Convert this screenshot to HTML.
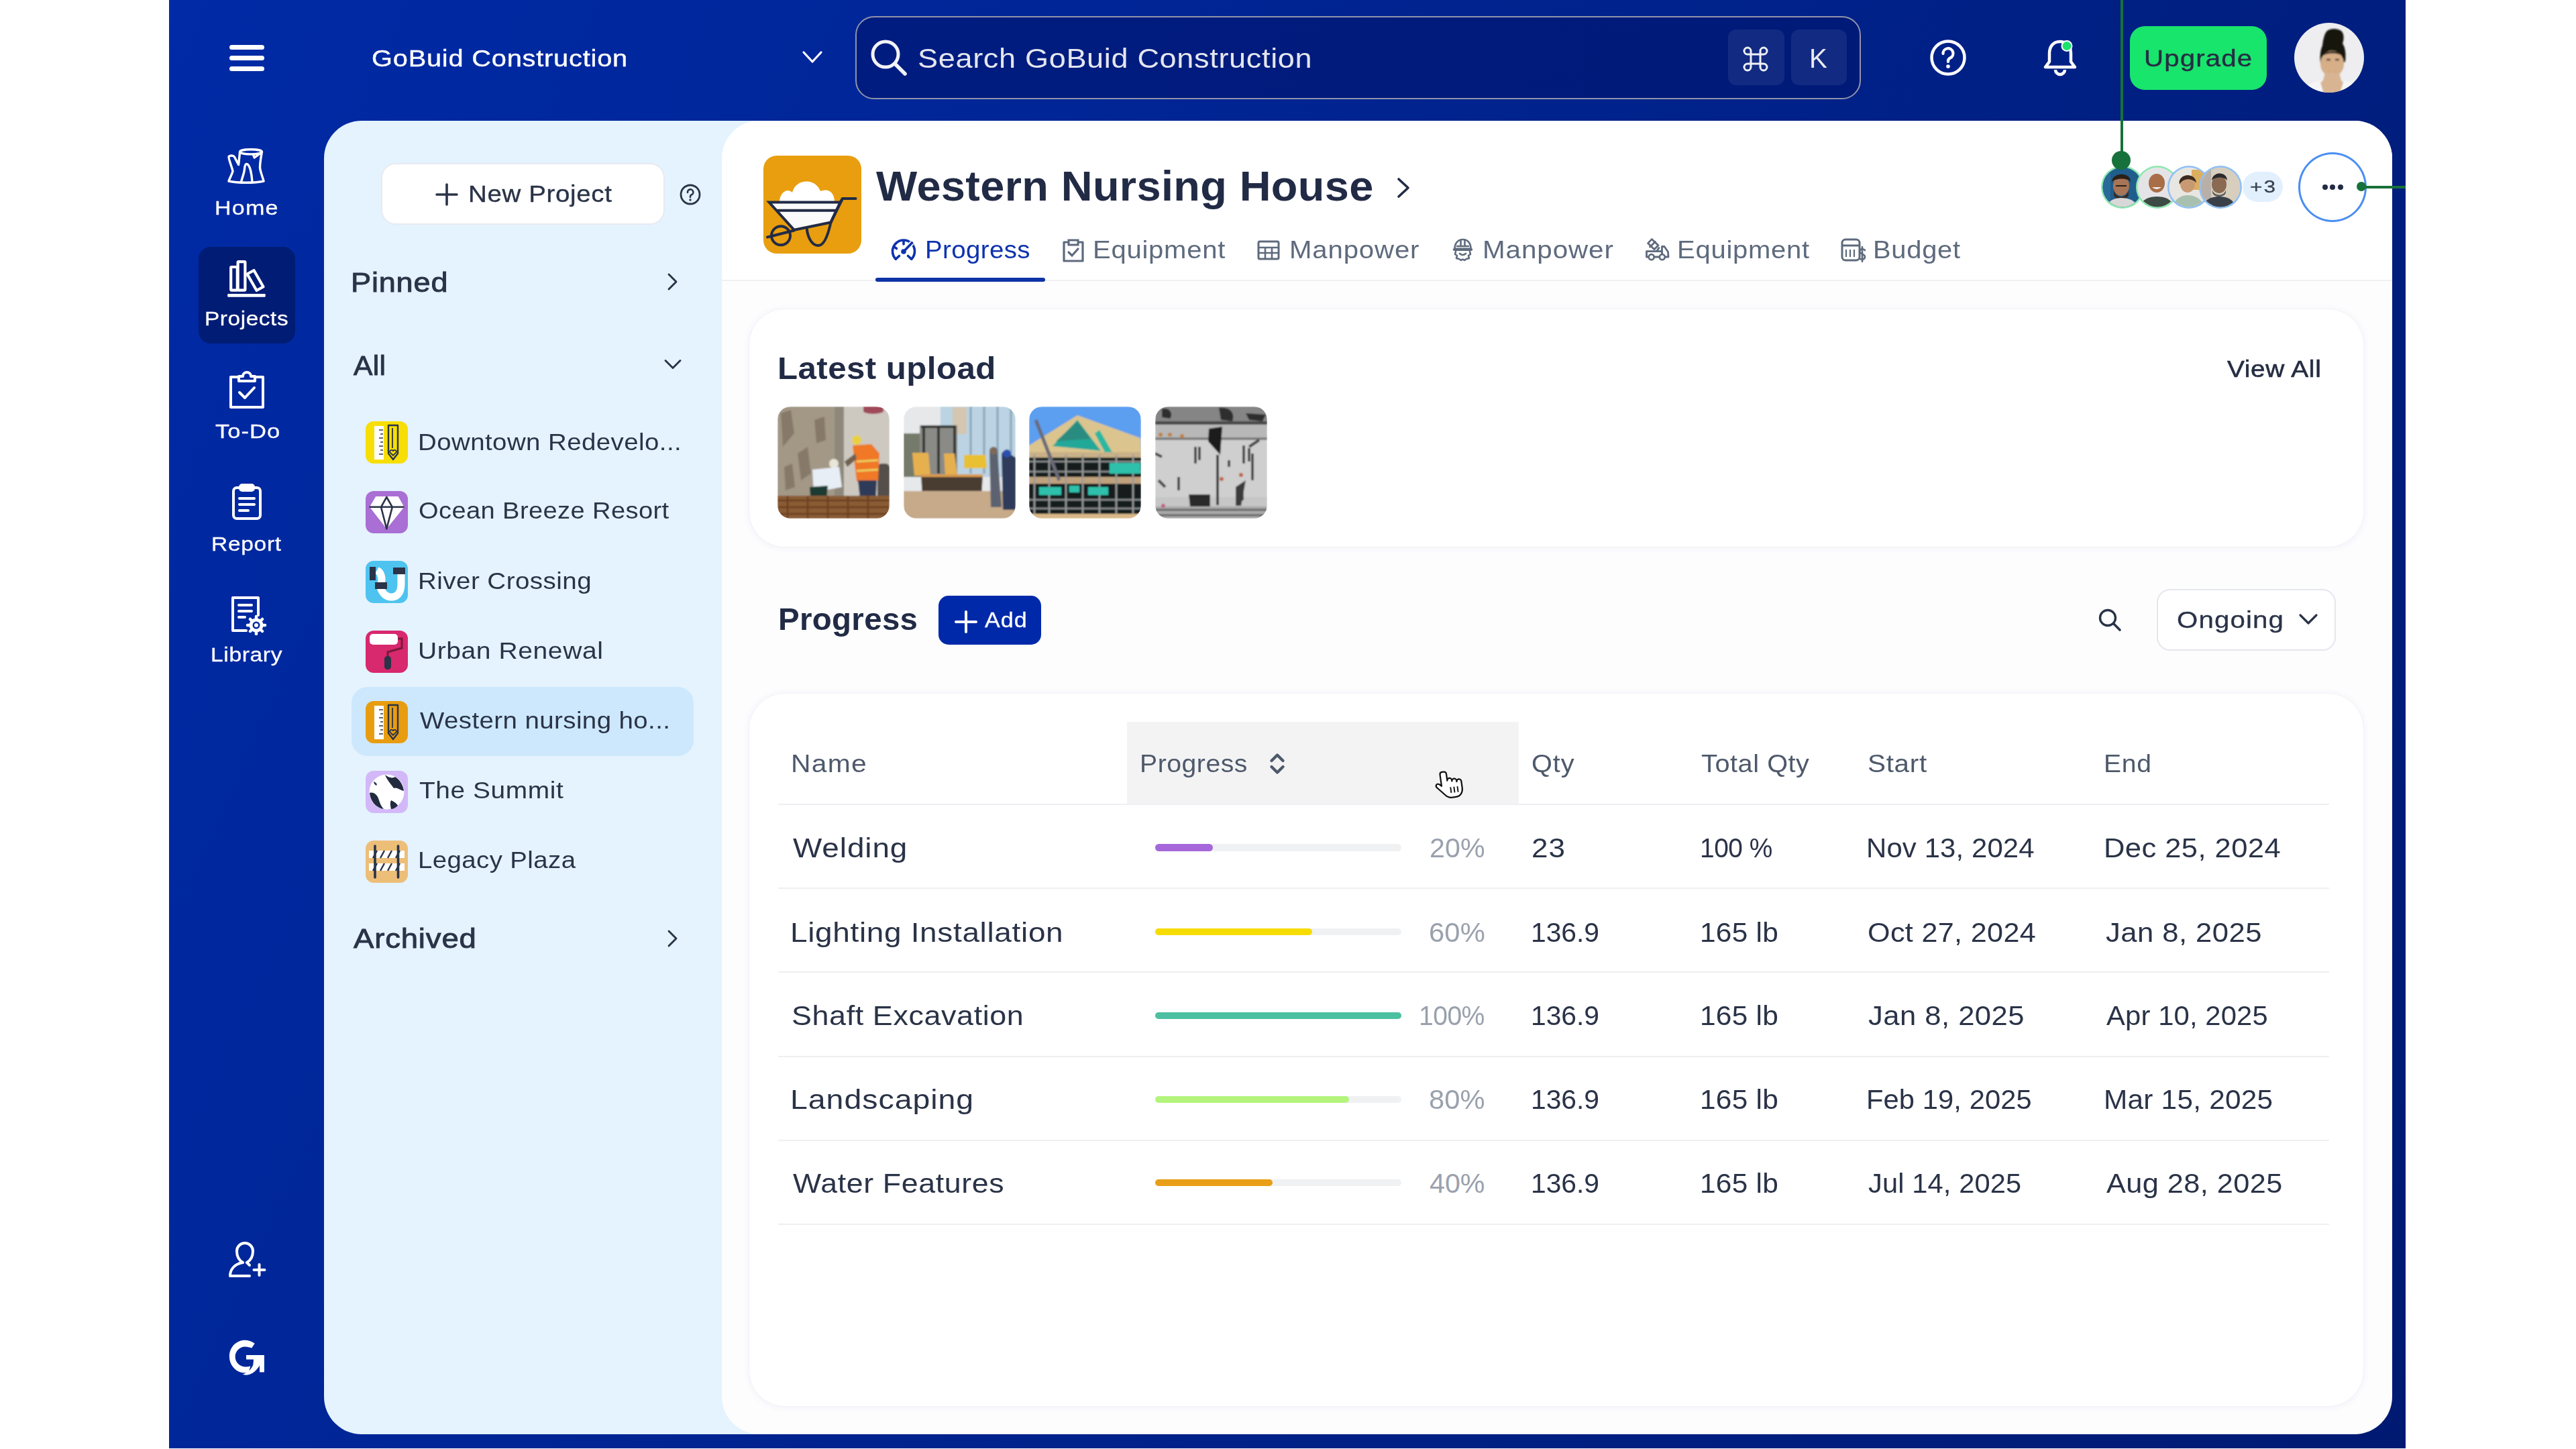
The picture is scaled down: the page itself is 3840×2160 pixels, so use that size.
<!DOCTYPE html><html><head><meta charset="utf-8"><style>
html,body{margin:0;padding:0;width:3840px;height:2160px;overflow:hidden;background:#fff;}
body{position:relative;font-family:"Liberation Sans",sans-serif;}
.a{position:absolute;display:block;}
.t{position:absolute;line-height:1;white-space:nowrap;}
</style></head><body>
<div class="a" style="left:252px;top:0px;width:3334px;height:2159px;background:linear-gradient(115deg,#002AA6 0%,#001C78 90%,#001A72 100%);"></div>
<div class="a" style="left:342px;top:66.5px;width:52px;height:7.0px;background:#fff;border-radius:4px;"></div>
<div class="a" style="left:342px;top:82.6px;width:52px;height:7.0px;background:#fff;border-radius:4px;"></div>
<div class="a" style="left:342px;top:98.8px;width:52px;height:7.0px;background:#fff;border-radius:4px;"></div>
<div class="t" style="left:554.2px;top:69.0px;font-size:35.18px;color:#fff;-webkit-text-stroke:0.4px #fff;letter-spacing:0.69px;transform:scaleX(1.1313);transform-origin:0 0;">GoBuid Construction</div>
<svg class="a" style="left:1194px;top:72px;" width="34" height="28" viewBox="0 0 34 28"><path d="M4 6 L17 20 L30 6" fill="none" stroke="#fff" stroke-width="3.2" stroke-linecap="round" stroke-linejoin="round"/></svg>
<div class="a" style="left:1274.5px;top:24px;width:1499.1px;height:124px;box-sizing:border-box;border:2.5px solid #8F93AA;border-radius:28px;background:linear-gradient(100deg,#001C80,#001A78);"></div>
<svg class="a" style="left:1295px;top:56px;" width="60" height="60" viewBox="0 0 60 60"><circle cx="25" cy="25" r="19" fill="none" stroke="#F2F3F7" stroke-width="5"/><path d="M39 39 L54 54" stroke="#F2F3F7" stroke-width="5.5" stroke-linecap="round"/></svg>
<div class="t" style="left:1367.6px;top:66.7px;font-size:41.13px;color:#E4E6EE;letter-spacing:0.60px;transform:scaleX(1.0960);transform-origin:0 0;">Search GoBuid Construction</div>
<div class="a" style="left:2576px;top:44px;width:83.5px;height:83px;background:rgba(255,255,255,0.07);border-radius:12px;"></div>
<div class="a" style="left:2670px;top:44px;width:83px;height:83px;background:rgba(255,255,255,0.07);border-radius:12px;"></div>
<svg class="a" style="left:2596px;top:67px;" width="42" height="42" viewBox="0 0 42 42"><path d="M14 14 H28 V28 H14 Z M14 14 V9 A5 5 0 1 0 9 14 H14 M28 14 V9 A5 5 0 1 1 33 14 H28 M14 28 V33 A5 5 0 1 1 9 28 H14 M28 28 V33 A5 5 0 1 0 33 28 H28" fill="none" stroke="#EEF0F5" stroke-width="3"/></svg>
<div class="t" style="left:2696.8px;top:66.4px;font-size:41.43px;color:#E8EAF0;transform:scaleX(0.9742);transform-origin:0 0;">K</div>
<svg class="a" style="left:2874px;top:56px;" width="60" height="60" viewBox="0 0 60 60"><circle cx="30" cy="30" r="24.5" fill="none" stroke="#fff" stroke-width="4.5"/><path d="M22.5 24 A7.5 7.5 0 1 1 33 30.5 C31 31.5 30 32.5 30 35 V36" fill="none" stroke="#fff" stroke-width="4.2" stroke-linecap="round"/><circle cx="30" cy="43" r="2.8" fill="#fff"/></svg>
<svg class="a" style="left:3042px;top:56px;" width="60" height="62" viewBox="0 0 60 62"><path d="M29 6 C18 6 13 14 13 24 V36 L7 44 H51 L45 36 V24 C45 14 40 6 29 6 Z" fill="none" stroke="#fff" stroke-width="4.5" stroke-linejoin="round"/><path d="M22 48 A7 7 0 0 0 36 48" fill="none" stroke="#fff" stroke-width="4.5"/><circle cx="39" cy="12.5" r="7.5" fill="#19E46C" stroke="#fff" stroke-width="2"/></svg>
<div class="a" style="left:3160.5px;top:0px;width:4.0px;height:240px;background:#17713A;"></div>
<div class="a" style="left:3148px;top:225px;width:28px;height:28px;background:#17713A;border-radius:50%;"></div>
<div class="a" style="left:3175px;top:39px;width:203.5px;height:94.5px;background:#18E56C;border-radius:22px;"></div>
<div class="t" style="left:3195.8px;top:68.9px;font-size:35.18px;color:#262D45;-webkit-text-stroke:0.4px #262D45;letter-spacing:0.93px;transform:scaleX(1.1466);transform-origin:0 0;">Upgrade</div>
<svg class="a" style="left:3419.5px;top:33.5px;" width="105" height="105" viewBox="0 0 105 105"><defs><clipPath id="avc"><circle cx="52" cy="52" r="52"/></clipPath><filter id="avb"><feGaussianBlur stdDeviation="1"/></filter></defs><g clip-path="url(#avc)"><rect width="105" height="105" fill="#EEEEF0"/><g filter="url(#avb)"><path d="M49 12 C54 8 64 8 70 12 C75 17 74 25 72 31 C77 38 77 50 76 58 L72 60 L39 60 C38 50 39 40 42 34 C43 25 45 16 49 12 Z" fill="#141210"/><ellipse cx="56.5" cy="61" rx="17.5" ry="19.5" fill="#D6AE88"/><path d="M42 50 C46 40 68 40 72 50 C68 44 46 44 42 50Z" fill="#2A2018"/><path d="M48 55 H54 M61 55 H67" stroke="#5A4030" stroke-width="2.4"/><path d="M51 74 Q57 78 63 74" fill="none" stroke="#A06050" stroke-width="1.8"/><path d="M46 74 L67 74 L70 86 L76 92 L78 105 L34 105 L36 92 L43 86 Z" fill="#D8B492"/><path d="M10 105 C14 94 26 88 38 86 L44 105 Z M104 105 C100 94 88 88 74 86 L68 105 Z" fill="#F6F6F6"/></g></g></svg>
<svg class="a" style="left:330px;top:212px;" width="74" height="70" viewBox="0 0 74 70"><g fill="none" stroke="#fff" stroke-width="3.4" stroke-linejoin="round" stroke-linecap="round"><ellipse cx="44" cy="14.3" rx="16.4" ry="3.6"/><path d="M27.6 14.5 L25.6 33.5 L19.5 22 C18 19.5 13 19.5 11 21.5 C10 23 16 38 17 43 C16 48 12 54 11 58 C25 61 50 61 63 58 C61 50 58 44 57.5 38 C57.5 30 59 22 60.4 14.5"/><path d="M47.5 18.5 L49.3 23 L58 16.5"/><path d="M30 57.5 C32 50 34 46 34.5 40 C35 34 36 32.5 37.5 32.5 C42 32.5 45 45 45.8 57.5"/></g></svg>
<div class="t" style="left:320.4px;top:294.8px;font-size:29.80px;color:#fff;-webkit-text-stroke:0.3px #fff;letter-spacing:1.05px;transform:scaleX(1.1423);transform-origin:0 0;">Home</div>
<div class="a" style="left:295.5px;top:368px;width:144.5px;height:144px;background:#001C74;border-radius:18px;"></div>
<svg class="a" style="left:330px;top:380px;" width="74" height="70" viewBox="0 0 74 70"><g fill="none" stroke="#fff" stroke-width="4.2" stroke-linejoin="round"><rect x="14.2" y="18" width="9.6" height="34.6" rx="1"/><rect x="24.6" y="10.2" width="10.8" height="42.4" rx="1"/><path d="M38.5 28.5 L48.5 23 L62.5 47.5 L52.5 53 Z"/></g><rect x="9.2" y="58" width="56.5" height="4.8" rx="1.2" fill="#fff"/></svg>
<div class="t" style="left:305.0px;top:460.3px;font-size:29.80px;color:#fff;-webkit-text-stroke:0.3px #fff;letter-spacing:0.53px;transform:scaleX(1.1189);transform-origin:0 0;">Projects</div>
<svg class="a" style="left:338px;top:549px;" width="60" height="64" viewBox="0 0 60 64"><g fill="none" stroke="#fff" stroke-width="4" stroke-linejoin="round" stroke-linecap="round"><path d="M18 13 H6 V58 H54 V13 H42"/><path d="M18 19 V12 H24 A6 6 0 0 1 36 12 H42 V19 Z"/><path d="M19 36 L27 44 L41 29"/></g></svg>
<div class="t" style="left:320.5px;top:628.3px;font-size:29.80px;color:#fff;-webkit-text-stroke:0.3px #fff;letter-spacing:0.89px;transform:scaleX(1.1596);transform-origin:0 0;">To-Do</div>
<svg class="a" style="left:344px;top:719px;" width="48" height="58" viewBox="0 0 48 58"><g fill="none" stroke="#fff" stroke-width="4" stroke-linejoin="round" stroke-linecap="round"><rect x="4" y="8" width="40" height="46" rx="5"/><rect x="14" y="4" width="20" height="8" rx="3"/><path d="M13 24 H35 M13 33 H35 M13 42 H26"/></g></svg>
<div class="t" style="left:315.0px;top:795.8px;font-size:29.80px;color:#fff;-webkit-text-stroke:0.3px #fff;letter-spacing:0.64px;transform:scaleX(1.1234);transform-origin:0 0;">Report</div>
<svg class="a" style="left:341px;top:885px;" width="58" height="62" viewBox="0 0 58 62"><g fill="none" stroke="#fff" stroke-width="4" stroke-linejoin="round" stroke-linecap="round"><path d="M26 55 H6 V6 H44 V32"/><path d="M15 17 H34 M15 26 H34 M15 35 H24"/></g><g transform="translate(41 47)"><circle r="8" fill="none" stroke="#fff" stroke-width="5"/><g stroke="#fff" stroke-width="4.5" stroke-linecap="round"><path d="M0 -13 V-10 M0 13 V10 M-13 0 H-10 M13 0 H10 M-9 -9 L-7 -7 M9 9 L7 7 M-9 9 L-7 7 M9 -9 L7 -7"/></g><circle r="3" fill="#fff"/></g></svg>
<div class="t" style="left:313.5px;top:961.3px;font-size:29.80px;color:#fff;-webkit-text-stroke:0.3px #fff;letter-spacing:0.56px;transform:scaleX(1.1269);transform-origin:0 0;">Library</div>
<svg class="a" style="left:338px;top:1848px;" width="62" height="60" viewBox="0 0 62 60"><g fill="none" stroke="#fff" stroke-width="4" stroke-linecap="round" stroke-linejoin="round"><path d="M24 34 C17 30 15 24 15 17 A12 12 0 0 1 39 17 C39 24 37 30 30 34"/><path d="M30 34 L34 38 M24 34 C12 36 5 44 5 54 H34"/><path d="M48.5 37 V53 M40.5 45 H56.5"/></g></svg>
<svg class="a" style="left:336px;top:1990px;" width="64" height="66" viewBox="0 0 64 66"><path d="M43.7 12.8 C39 9 34 7.7 29.2 7.7 C16 7.7 5.9 18.5 5.9 32 C5.9 45.5 16 56.5 29 56.5 C31 56.5 33 56.3 34.5 55.8 L37.4 46.5 C35 47.2 32 47.6 29.2 47.4 C21 47 14.6 40.5 14.6 32.5 C14.6 24.5 21 17.5 29.2 17.5 C33 17.5 36.5 18.5 39.2 19.6 Z" fill="#fff"/><path d="M31 30 H57.9 V55.6 H51 V45.6 C48 51 42 57 36.4 58.8 C32 60 28 59.8 25.5 58.8 C32 57 38 52 41 45.6 C41.8 42 41.9 39 41.9 36.4 H31 Z" fill="#fff"/></svg>
<div class="a" style="left:482.5px;top:180px;width:657.5px;height:1958px;background:#E4F3FE;border-radius:56px 0 0 56px;"></div>
<div class="a" style="left:567.5px;top:243px;width:423.20000000000005px;height:92px;box-sizing:border-box;background:#FFFFFF;border:2px solid #E7EAF0;border-radius:22px;"></div>
<svg class="a" style="left:648px;top:272px;" width="36" height="36" viewBox="0 0 36 36"><path d="M18 3 V33 M3 18 H33" stroke="#2A3347" stroke-width="3.6" stroke-linecap="round"/></svg>
<div class="t" style="left:697.6px;top:271.7px;font-size:34.88px;color:#2A3347;-webkit-text-stroke:0.4px #2A3347;letter-spacing:0.58px;transform:scaleX(1.1033);transform-origin:0 0;">New Project</div>
<svg class="a" style="left:1011px;top:272px;" width="36" height="36" viewBox="0 0 36 36"><circle cx="18" cy="18" r="14" fill="none" stroke="#2A3347" stroke-width="2.8"/><path d="M14 15 A4.2 4.2 0 1 1 19.5 18.5 C18.5 19 18 19.5 18 21 V22" fill="none" stroke="#2A3347" stroke-width="2.6" stroke-linecap="round"/><circle cx="18" cy="26" r="1.7" fill="#2A3347"/></svg>
<div class="t" style="left:522.9px;top:400.5px;font-size:41.13px;color:#2A3347;-webkit-text-stroke:0.9px #2A3347;letter-spacing:0.73px;transform:scaleX(1.0971);transform-origin:0 0;">Pinned</div>
<svg class="a" style="left:992px;top:404px;" width="24" height="32" viewBox="0 0 24 32"><path d="M5 5 L16 16 L5 27" fill="none" stroke="#2A3347" stroke-width="2.9" stroke-linecap="round" stroke-linejoin="round"/></svg>
<div class="t" style="left:527.0px;top:524.7px;font-size:41.13px;color:#2A3347;-webkit-text-stroke:0.9px #2A3347;letter-spacing:0.26px;transform:scaleX(1.0361);transform-origin:0 0;">All</div>
<svg class="a" style="left:987px;top:532px;" width="32" height="24" viewBox="0 0 32 24"><path d="M5 5.5 L16 16.5 L27 5.5" fill="none" stroke="#2A3347" stroke-width="2.9" stroke-linecap="round" stroke-linejoin="round"/></svg>
<div class="a" style="left:523.8px;top:1024px;width:510.20000000000005px;height:103.40000000000009px;background:#CDE8FC;border-radius:24px;"></div>
<svg class="a" style="left:544.5px;top:627.6px;" width="63" height="63" viewBox="0 0 63 63"><rect width="63" height="63" rx="12" fill="#F7DE06"/><rect x="13" y="7" width="14" height="50" fill="#FFFFFF"/><path d="M20 13 H26 M22 19 H26 M20 25 H26 M22 31 H26 M20 37 H26 M22 43 H26 M20 49 H26" stroke="#2A3347" stroke-width="1.6"/><path d="M34 6 H48 V48 L41 57 L34 48 Z" fill="none" stroke="#2A3347" stroke-width="2.4" stroke-linejoin="round"/><path d="M40 10 V40" stroke="#2A3347" stroke-width="1.8"/><path d="M36 46 C36 42 41 42 41 45 C41 42 46 42 46 46 L41 51 Z" fill="none" stroke="#2A3347" stroke-width="1.8"/></svg>
<div class="t" style="left:622.6px;top:641.6px;font-size:35.90px;color:#2A3347;letter-spacing:0.41px;transform:scaleX(1.0705);transform-origin:0 0;">Downtown Redevelo...</div>
<svg class="a" style="left:544.5px;top:732px;" width="63" height="63" viewBox="0 0 63 63"><rect width="63" height="63" rx="12" fill="#A96FD4"/><path d="M6 23.8 L15.2 8.1 H48.6 L57.5 23.8 L31.3 56.3 Z" fill="#FFFFFF"/><path d="M5.5 23.8 H57.5 M23 23.8 L31.3 9 L39.8 23.8 M23 23.8 L31.3 56.3 L39.8 23.8" fill="none" stroke="#2A3347" stroke-width="2.6" stroke-linejoin="round"/></svg>
<div class="t" style="left:624.0px;top:744.4px;font-size:35.90px;color:#2A3347;letter-spacing:0.37px;transform:scaleX(1.0609);transform-origin:0 0;">Ocean Breeze Resort</div>
<svg class="a" style="left:544.5px;top:836px;" width="63" height="63" viewBox="0 0 63 63"><rect width="63" height="63" rx="12" fill="#4EC3EF"/><path d="M17 14 C24 18 26 28 22 36 C22 46 30 55 40 54 C50 53 53 44 53 34 V18" fill="none" stroke="#FFFFFF" stroke-width="11"/><rect x="6" y="9" width="9" height="20" fill="#2A3347"/><rect x="41" y="10" width="18" height="10" fill="#2A3347"/><rect x="14" y="32" width="18" height="10" fill="#2A3347"/></svg>
<div class="t" style="left:622.6px;top:848.6px;font-size:35.90px;color:#2A3347;letter-spacing:0.41px;transform:scaleX(1.0745);transform-origin:0 0;">River Crossing</div>
<svg class="a" style="left:544.5px;top:940px;" width="63" height="63" viewBox="0 0 63 63"><rect width="63" height="63" rx="12" fill="#D8286E"/><rect x="6" y="5" width="42" height="16" rx="5" fill="#FFFFFF"/><path d="M48 12 H54 V26 L33 32 V40" fill="none" stroke="#7A1A3A" stroke-width="3"/><rect x="28" y="38" width="10" height="20" rx="4.5" fill="#2A3347"/></svg>
<div class="t" style="left:622.8px;top:952.6px;font-size:35.90px;color:#2A3347;letter-spacing:0.54px;transform:scaleX(1.0865);transform-origin:0 0;">Urban Renewal</div>
<svg class="a" style="left:544.5px;top:1044.6px;" width="63" height="63" viewBox="0 0 63 63"><rect width="63" height="63" rx="12" fill="#E89D10"/><rect x="13" y="7" width="14" height="50" fill="#FFFFFF"/><path d="M20 13 H26 M22 19 H26 M20 25 H26 M22 31 H26 M20 37 H26 M22 43 H26 M20 49 H26" stroke="#2A3347" stroke-width="1.6"/><path d="M34 6 H48 V48 L41 57 L34 48 Z" fill="none" stroke="#2A3347" stroke-width="2.4" stroke-linejoin="round"/><path d="M40 10 V40" stroke="#2A3347" stroke-width="1.8"/><path d="M36 46 C36 42 41 42 41 45 C41 42 46 42 46 46 L41 51 Z" fill="none" stroke="#2A3347" stroke-width="1.8"/></svg>
<div class="t" style="left:625.5px;top:1057.2px;font-size:35.90px;color:#2A3347;letter-spacing:0.38px;transform:scaleX(1.0716);transform-origin:0 0;">Western nursing ho...</div>
<svg class="a" style="left:544.5px;top:1149px;" width="63" height="63" viewBox="0 0 63 63"><rect width="63" height="63" rx="12" fill="#D3B8F8"/><circle cx="31.5" cy="31.5" r="26" fill="#FFFFFF"/><path d="M29 6 C34 10 40 12 44 9 C52 14 56 22 57 30 C50 28 46 24 42 26 C38 20 32 14 29 6Z" fill="#222A40"/><path d="M6 33 C12 31 18 36 20 44 C22 50 24 54 27 57 C15 55 7 45 6 33Z" fill="#222A40"/><path d="M38 44 C42 46 46 48 48 52 C45 55 41 57 38 57 C37 52 36 48 38 44Z" fill="#222A40"/><path d="M12 16 C16 18 18 20 16 22 C14 21 12 19 12 16Z" fill="#222A40"/></svg>
<div class="t" style="left:624.9px;top:1160.6px;font-size:35.90px;color:#2A3347;letter-spacing:0.54px;transform:scaleX(1.0825);transform-origin:0 0;">The Summit</div>
<svg class="a" style="left:544.5px;top:1253px;" width="63" height="63" viewBox="0 0 63 63"><rect width="63" height="63" rx="12" fill="#EDBE78"/><rect x="5" y="15" width="53" height="11" fill="#FFFFFF"/><rect x="5" y="34" width="53" height="11" fill="#FFFFFF"/><path d="M14 8 V55 M48.5 8 V55" stroke="#2A3347" stroke-width="3.6" stroke-linecap="round"/><path d="M22 26 L28 15 M33 26 L39 15 M22 45 L28 34 M33 45 L39 34 M11 26 L17 15 M45 26 L51 15 M11 45 L17 34 M45 45 L51 34" stroke="#2A3347" stroke-width="2.4"/></svg>
<div class="t" style="left:622.6px;top:1264.6px;font-size:35.90px;color:#2A3347;letter-spacing:0.41px;transform:scaleX(1.0680);transform-origin:0 0;">Legacy Plaza</div>
<div class="t" style="left:526.5px;top:1379.2px;font-size:41.13px;color:#2A3347;-webkit-text-stroke:0.9px #2A3347;letter-spacing:0.73px;transform:scaleX(1.1074);transform-origin:0 0;">Archived</div>
<svg class="a" style="left:992px;top:1383px;" width="24" height="32" viewBox="0 0 24 32"><path d="M5 5 L16 16 L5 27" fill="none" stroke="#2A3347" stroke-width="2.9" stroke-linecap="round" stroke-linejoin="round"/></svg>
<div class="a" style="left:1076.4px;top:180px;width:2489.4px;height:1957.5px;background:#FDFDFE;border-radius:56px;"></div>
<div class="a" style="left:1076.4px;top:180px;width:2489.4px;height:237px;background:#FFFFFF;border-radius:56px 56px 0 0;"></div>
<div class="a" style="left:1076.4px;top:416.5px;width:2489.4px;height:2.0px;background:#F1F1F4;"></div>
<svg class="a" style="left:1138.3px;top:231.6px;" width="146" height="146" viewBox="0 0 146 146"><rect width="146" height="146" rx="20" fill="#E89E0E"/><path d="M24 68.5 C24 60 30 52 36 52 C39 52 41 53 43 55 C46 44 54 38.5 64.5 38.5 C75 38.5 82 45 85 53 C87 52 90 51.5 93 51.5 C100 51.5 106 58 106 68.5 Z" fill="#FFFFFF"/><path d="M8.5 69.6 H114.5 L100.5 99.4 L45.8 110.8 Z" fill="#FAFAFA" stroke="#222B45" stroke-width="4" stroke-linejoin="miter"/><path d="M20 81.7 H110" stroke="#222B45" stroke-width="4"/><path d="M114.5 69.6 L118 64 H137.5" fill="none" stroke="#222B45" stroke-width="4" stroke-linecap="round"/><path d="M118 64 L100.5 99.4" stroke="#222B45" stroke-width="4"/><path d="M6 121.5 L45.8 111.5" stroke="#222B45" stroke-width="4" stroke-linecap="round"/><circle cx="26" cy="119.3" r="14" fill="none" stroke="#222B45" stroke-width="4"/><path d="M64.6 107.5 C66 125 74 134 82 134 C90 134 96 120 100.5 99.4" fill="none" stroke="#222B45" stroke-width="4"/></svg>
<div class="t" style="left:1306.3px;top:246.0px;font-size:62.94px;color:#222B45;font-weight:700;letter-spacing:0.35px;transform:scaleX(1.0307);transform-origin:0 0;">Western Nursing House</div>
<svg class="a" style="left:2078px;top:262px;" width="30" height="36" viewBox="0 0 30 36"><path d="M7 5 L21 18 L7 31" fill="none" stroke="#222B45" stroke-width="3.6" stroke-linecap="round" stroke-linejoin="round"/></svg>
<svg class="a" style="left:1326px;top:354px;" width="42" height="36" viewBox="0 0 42 36"><g fill="none" stroke="#0D33AD" stroke-width="3.6" stroke-linecap="round" stroke-linejoin="round"><path d="M9.3 32.2 A16.5 16.5 0 1 1 32.7 32.2"/><path d="M9.3 32.2 L14.5 27.5 M32.7 32.2 L27.5 27.5 M21 5 V10 M7 14 L10.5 16.5"/></g><path d="M21 21 L33.5 8" stroke="#fff" stroke-width="7"/><path d="M21 21 L33.5 8" stroke="#0D33AD" stroke-width="3.6" stroke-linecap="round"/><circle cx="21" cy="21" r="3.8" fill="#0D33AD"/></svg>
<div class="t" style="left:1379.1px;top:354.7px;font-size:36.34px;color:#0D33AD;letter-spacing:0.37px;transform:scaleX(1.0575);transform-origin:0 0;">Progress</div>
<div class="a" style="left:1304.8px;top:413.6px;width:252.79999999999995px;height:6.0px;background:#0E33A6;border-radius:3px;"></div>
<svg class="a" style="left:1581px;top:354px;" width="38" height="38" viewBox="0 0 38 38"><path d="M12 7 H5 V35 H33 V7 H26" fill="none" stroke="#5E6A7D" stroke-width="3.2" stroke-linejoin="round"/><path d="M12 11 V4 H26 V11 Z" fill="none" stroke="#5E6A7D" stroke-width="3"/><path d="M12 22 L17 27 L26 17" fill="none" stroke="#5E6A7D" stroke-width="3.2" stroke-linecap="round"/></svg>
<div class="t" style="left:1629.3px;top:354.7px;font-size:36.34px;color:#5E6A7D;letter-spacing:0.66px;transform:scaleX(1.1028);transform-origin:0 0;">Equipment</div>
<svg class="a" style="left:1873px;top:356px;" width="36" height="34" viewBox="0 0 36 34"><rect x="3" y="4" width="30" height="26" rx="2" fill="none" stroke="#5E6A7D" stroke-width="3"/><path d="M3 13 H33 M3 21 H33 M13 13 V30 M23 13 V30" stroke="#5E6A7D" stroke-width="2.6"/></svg>
<div class="t" style="left:1922.3px;top:354.7px;font-size:36.34px;color:#5E6A7D;letter-spacing:0.76px;transform:scaleX(1.1058);transform-origin:0 0;">Manpower</div>
<svg class="a" style="left:2160px;top:350px;" width="40" height="44" viewBox="0 0 40 44"><g fill="none" stroke="#5E6A7D" stroke-width="2.6" stroke-linejoin="round" stroke-linecap="round"><path d="M8.5 21 C8.5 12 14 7 20.7 7 C27.4 7 32.5 12 32.5 21"/><path d="M17.5 8.5 V16 M23.5 8.5 V16 M12 17 H29"/><path d="M7 22 H34"/><path d="M10 25 L9 29 L12 31 L11 35 L15 36 L18 38 L20.5 36.5 L23 38 L26 36 L30 35 L29 31 L32 29 L31 25"/><path d="M16 28 Q20.5 32 25 28"/></g><rect x="6.5" y="19.5" width="28" height="4.5" rx="1.5" fill="#5E6A7D"/></svg>
<div class="t" style="left:2210.3px;top:354.7px;font-size:36.34px;color:#5E6A7D;letter-spacing:0.80px;transform:scaleX(1.1126);transform-origin:0 0;">Manpower</div>
<svg class="a" style="left:2448px;top:348px;" width="48" height="46" viewBox="0 0 48 46"><g fill="none" stroke="#5E6A7D" stroke-width="2.8" stroke-linejoin="round" stroke-linecap="round"><path d="M8.5 14.6 L14.3 8.6 L24 17.8 L18 23.8 Z"/><path d="M11.5 20 L19.5 12.5"/><path d="M6.5 26.7 H29.5 V35 H6.5 Z"/><path d="M29.5 35 V19.5 H33 L38.5 27.5 L39 35 H33"/><path d="M22 26 L25 21.5"/></g><circle cx="13.7" cy="35.2" r="4" fill="#fff" stroke="#5E6A7D" stroke-width="2.8"/><circle cx="29.8" cy="35.2" r="4" fill="#fff" stroke="#5E6A7D" stroke-width="2.8"/></svg>
<div class="t" style="left:2499.8px;top:354.7px;font-size:36.34px;color:#5E6A7D;letter-spacing:0.66px;transform:scaleX(1.1015);transform-origin:0 0;">Equipment</div>
<svg class="a" style="left:2743px;top:354px;" width="40" height="38" viewBox="0 0 40 38"><g fill="none" stroke="#5E6A7D" stroke-width="3"><rect x="3" y="3" width="26" height="31" rx="5"/><path d="M3 12 H29"/><path d="M9 18 V29 M15 18 V29 M21 18 V29" stroke-width="2.2"/></g><path d="M37 19 C34 16 29 17 29 21 C29 25 37 24 37 29 C37 33 31 34 29 31 M33 14 V36" fill="none" stroke="#5E6A7D" stroke-width="2.6" stroke-linecap="round"/></svg>
<div class="t" style="left:2792.3px;top:354.7px;font-size:36.34px;color:#5E6A7D;letter-spacing:0.66px;transform:scaleX(1.0977);transform-origin:0 0;">Budget</div>
<div class="a" style="left:3342.8px;top:256px;width:60.19999999999982px;height:45px;background:#E2F0FE;border-radius:23px;"></div>
<svg class="a" style="left:3131.8px;top:247.3px;" width="64" height="64" viewBox="0 0 64 64"><defs><clipPath id="av0"><circle cx="32" cy="32" r="29.5"/></clipPath></defs><circle cx="32" cy="32" r="32" fill="#8EE8B0"/><g clip-path="url(#av0)"><rect width="64" height="64" fill="#1F5E8C"/><rect x="0" y="0" width="14" height="64" fill="#2A6A98"/><ellipse cx="30" cy="30" rx="12" ry="15" fill="#A87556"/><path d="M16 24 C16 10 44 8 44 24 C40 18 22 18 16 24Z" fill="#2A2018"/><path d="M19 36 C22 50 38 50 41 36 L41 44 C38 52 22 52 19 44Z" fill="#3A2A20"/><path d="M22 30 H38" stroke="#2A2018" stroke-width="2"/><path d="M6 64 C10 52 20 48 30 48 C42 48 52 52 56 64Z" fill="#D8D8D8"/></g></svg>
<svg class="a" style="left:3184.4px;top:247.3px;" width="64" height="64" viewBox="0 0 64 64"><defs><clipPath id="av1"><circle cx="32" cy="32" r="29.5"/></clipPath></defs><circle cx="32" cy="32" r="32" fill="#8EE8B0"/><g clip-path="url(#av1)"><rect width="64" height="64" fill="#E4E4E6"/><ellipse cx="31" cy="26" rx="12" ry="14" fill="#A86E48"/><path d="M24 32 Q31 38 38 32" fill="#F4F0EA"/><path d="M4 64 C8 50 20 46 31 46 C44 46 54 50 58 64Z" fill="#3E4A44"/></g></svg>
<svg class="a" style="left:3230.5px;top:247.3px;" width="64" height="64" viewBox="0 0 64 64"><defs><clipPath id="av2"><circle cx="32" cy="32" r="29.5"/></clipPath></defs><circle cx="32" cy="32" r="32" fill="#8FC0F5"/><g clip-path="url(#av2)"><rect width="64" height="64" fill="#E8E6E0"/><rect x="36" y="6" width="28" height="30" fill="#D8A040" opacity="0.8"/><ellipse cx="30" cy="27" rx="11" ry="13" fill="#C89A74"/><path d="M18 28 C14 12 42 8 43 26 C40 20 24 16 18 28Z" fill="#3A2A20"/><path d="M6 64 C10 50 20 44 30 44 C42 44 52 50 56 64Z" fill="#A8C0B0"/></g></svg>
<svg class="a" style="left:3277.5px;top:247.3px;" width="64" height="64" viewBox="0 0 64 64"><defs><clipPath id="av3"><circle cx="32" cy="32" r="29.5"/></clipPath></defs><circle cx="32" cy="32" r="32" fill="#8FC0F5"/><g clip-path="url(#av3)"><rect width="64" height="64" fill="#D8CEBE"/><rect x="0" y="0" width="18" height="64" fill="#B8B0A8"/><ellipse cx="30" cy="28" rx="11" ry="13" fill="#8A6A52"/><path d="M19 22 C20 8 42 8 42 22 C38 16 24 16 19 22Z" fill="#2A2A2A"/><path d="M20 36 C22 46 38 46 40 36 L40 40 C38 48 22 48 20 40Z" fill="#5A5A58"/><path d="M4 64 C8 50 18 46 30 46 C42 46 52 50 56 64Z" fill="#3A4048"/></g></svg>
<div class="t" style="left:3354.1px;top:264.8px;font-size:26.16px;color:#3A4252;-webkit-text-stroke:0.3px #3A4252;letter-spacing:1.60px;transform:scaleX(1.2087);transform-origin:0 0;">+3</div>
<div class="a" style="left:3425.7px;top:226.7px;width:102.30000000000018px;height:104.0px;box-sizing:border-box;border:3px solid #4A8EF2;border-radius:50%;background:#fff;"></div>
<div class="a" style="left:3461.5px;top:275px;width:8.0px;height:8px;background:#222B45;border-radius:50%;"></div>
<div class="a" style="left:3473px;top:275px;width:8px;height:8px;background:#222B45;border-radius:50%;"></div>
<div class="a" style="left:3484.5px;top:275px;width:8.0px;height:8px;background:#222B45;border-radius:50%;"></div>
<div class="a" style="left:3521px;top:276.5px;width:65px;height:4.0px;background:#17713A;"></div>
<div class="a" style="left:3513px;top:271px;width:14px;height:14px;background:#17713A;border-radius:50%;"></div>
<div class="a" style="left:1116px;top:460px;width:2408px;height:356px;box-sizing:border-box;background:#FFFFFF;border:1.5px solid #F3F3F8;border-radius:54px;box-shadow:0 1px 10px 1px rgba(60,60,150,0.05);"></div>
<div class="t" style="left:1159.1px;top:525.6px;font-size:46.51px;color:#222B45;font-weight:700;letter-spacing:0.45px;transform:scaleX(1.0575);transform-origin:0 0;">Latest upload</div>
<div class="t" style="left:3320.3px;top:532.5px;font-size:34.88px;color:#252D42;-webkit-text-stroke:0.6px #252D42;letter-spacing:0.58px;transform:scaleX(1.1132);transform-origin:0 0;">View All</div>
<svg class="a" style="left:1159px;top:606px;" width="167" height="167" viewBox="0 0 167 167"><defs><clipPath id="ph0"><rect width="167" height="167" rx="20"/></clipPath><filter id="bl0" x="-5%" y="-5%" width="110%" height="110%"><feGaussianBlur stdDeviation="0.9"/></filter></defs><g clip-path="url(#ph0)"><g filter="url(#bl0)"><rect width="167" height="167" fill="#B0A696"/><rect x="0" y="0" width="85" height="167" fill="#A39886"/><path d="M5 10 L20 5 L25 40 L8 60Z M30 70 L45 60 L50 100 L35 110Z M10 90 L22 85 L26 120 L12 125Z M55 20 L70 15 L72 50 L58 55Z" fill="#7E7262" opacity="0.8"/><rect x="85" y="0" width="14" height="167" fill="#8E887C"/><rect x="99" y="0" width="68" height="167" fill="#CDC9C0"/><path d="M128 0 H158 V8 C150 12 135 12 128 8Z" fill="#A04858"/><rect x="149" y="85" width="18" height="62" rx="6" fill="#55504C"/><circle cx="118" cy="50" r="7" fill="#EAD040"/><path d="M112 58 L140 56 L152 70 L150 110 L118 112 Z" fill="#F07828"/><path d="M118 82 L150 80 M118 96 L150 94" stroke="#E8D060" stroke-width="3"/><path d="M120 110 L148 110 L146 147 L124 147Z" fill="#2E3A58"/><path d="M100 82 L116 70 L118 78 L104 90Z" fill="#706050"/><circle cx="84" cy="85" r="7" fill="#E8E6D8"/><path d="M52 94 L92 90 L96 120 L54 128 Z" fill="#E8EEF6"/><path d="M48 120 L75 118 L72 152 L50 150 Z" fill="#1E3A30"/><rect x="0" y="133" width="167" height="34" fill="#8A5C34"/><path d="M0 140 H167 M0 150 H167 M0 160 H167 M15 133 V167 M45 133 V167 M75 133 V167 M105 133 V167 M135 133 V167" stroke="#6A4020" stroke-width="2.5"/></g></g></svg>
<svg class="a" style="left:1346.8px;top:606px;" width="167" height="167" viewBox="0 0 167 167"><defs><clipPath id="ph1"><rect width="167" height="167" rx="20"/></clipPath><filter id="bl1" x="-5%" y="-5%" width="110%" height="110%"><feGaussianBlur stdDeviation="0.9"/></filter></defs><g clip-path="url(#ph1)"><g filter="url(#bl1)"><rect width="167" height="167" fill="#E6E8EA"/><rect x="55" y="0" width="112" height="105" fill="#BBD3E2"/><path d="M100 0 V100 M120 0 V100 M140 0 V100 M160 0 V100" stroke="#8AA6B8" stroke-width="3"/><rect x="73" y="1" width="21" height="40" fill="#D4C6B0"/><rect x="0" y="40" width="26" height="65" fill="#767A6A"/><rect x="24" y="28" width="56" height="75" fill="#8A8A86"/><path d="M26 30 H78 M30 30 V100 M76 30 V100 M52 30 V100" stroke="#333" stroke-width="4"/><path d="M13 69 L37 69 L40 103 L16 103Z" fill="#E6B050"/><path d="M60 70 L76 70 L80 103 L62 103Z" fill="#E6B050"/><path d="M90 72 L122 72 L124 92 L90 92Z" fill="#E8C030"/><path d="M26 103 L118 103 L116 136 L28 136 Z" fill="#4A3C30"/><path d="M26 103 H118" stroke="#D89A50" stroke-width="4"/><rect x="0" y="126" width="167" height="41" fill="#C6AA8A"/><path d="M128 68 C128 60 140 60 140 68 L146 150 L130 150Z" fill="#5C6270"/><path d="M146 72 C146 64 160 64 160 72 L167 76 L167 154 L148 154Z" fill="#2E3A5A"/><circle cx="134" cy="66" r="6" fill="#7A6A5A"/><circle cx="154" cy="70" r="6" fill="#2A50B0"/></g></g></svg>
<svg class="a" style="left:1533.7px;top:606px;" width="167" height="167" viewBox="0 0 167 167"><defs><clipPath id="ph2"><rect width="167" height="167" rx="20"/></clipPath><filter id="bl2" x="-5%" y="-5%" width="110%" height="110%"><feGaussianBlur stdDeviation="0.9"/></filter></defs><g clip-path="url(#ph2)"><g filter="url(#bl2)"><rect width="167" height="167" fill="#5C9EF0"/><path d="M0 58 L72 13 L166 47 L167 80 L0 80Z" fill="#DCC48E"/><path d="M35 59 L72 20 L107 66 Z" fill="#24A898"/><path d="M40 52 L72 22 L92 48 Z" fill="#2C8C80"/><path d="M105 35 L125 70 L115 72 L98 40Z" fill="#2CB8A0"/><rect x="0" y="72" width="167" height="95" fill="#161C1C"/><rect x="0" y="68" width="167" height="8" fill="#C8B088"/><rect x="0" y="105" width="167" height="10" fill="#C0A27E"/><path d="M0 82 H167 M0 97 H167 M0 139 H167 M0 152 H167" stroke="#8A8C8C" stroke-width="2.5"/><path d="M8 72 V167 M30 72 V167 M55 72 V167 M80 72 V167 M105 72 V167 M130 72 V167 M155 72 V167" stroke="#9A9C9C" stroke-width="2.5"/><rect x="120" y="84" width="46" height="16" fill="#2EC0AA"/><rect x="60" y="118" width="15" height="10" fill="#2EC0AA"/><rect x="15" y="120" width="33" height="12" fill="#2EC0AA"/><rect x="88" y="120" width="30" height="12" fill="#2EC0AA"/><rect x="0" y="160" width="167" height="7" fill="#D8B888"/><path d="M10 20 L45 110" stroke="#6A6A78" stroke-width="5"/></g></g></svg>
<svg class="a" style="left:1721.7px;top:606px;" width="167" height="167" viewBox="0 0 167 167"><defs><clipPath id="ph3"><rect width="167" height="167" rx="20"/></clipPath><filter id="bl3" x="-5%" y="-5%" width="110%" height="110%"><feGaussianBlur stdDeviation="0.9"/></filter></defs><g clip-path="url(#ph3)"><g filter="url(#bl3)"><rect width="167" height="167" fill="#C6C6C6"/><rect x="0" y="0" width="167" height="24" fill="#858585"/><path d="M10 4 C20 0 28 10 22 18 L10 16Z M95 2 C110 0 120 8 115 22 L98 20Z M135 10 L165 12 L160 22 L140 20Z" fill="#2E2E2E"/><rect x="0" y="22" width="167" height="5" fill="#4A4A4A"/><rect x="0" y="27" width="167" height="22" fill="#B8B8B8"/><path d="M0 48 H167" stroke="#6E6E6E" stroke-width="3"/><rect x="0" y="50" width="167" height="85" fill="#CFCFCF"/><path d="M80 33 L100 30 L97 72 L79 52Z" fill="#1C1C1C"/><path d="M93 72 V147" stroke="#3A3A3A" stroke-width="4"/><path d="M60 60 V85 M66 60 V80 M132 58 V85 M140 62 V82 M145 70 V110 M110 80 V90 M124 118 V140 M130 118 V140 M35 105 V125" stroke="#333" stroke-width="3.5"/><path d="M0 70 L10 75 M5 110 L15 120 M155 50 L140 60" stroke="#444" stroke-width="4"/><path d="M50 131 L82 131 L82 149 L52 149Z" fill="#2A2A2A"/><path d="M120 120 L135 110 L128 148 L120 148Z" fill="#3A3A3A"/><rect x="0" y="149" width="167" height="18" fill="#A8A8A8"/><path d="M0 154 H167 M0 162 H167" stroke="#5A5A5A" stroke-width="2.5"/><circle cx="8" cy="42" r="3" fill="#C08040"/><circle cx="22" cy="42" r="3" fill="#C08040"/><circle cx="40" cy="44" r="3" fill="#C08040"/><circle cx="99" cy="108" r="3" fill="#C06040"/><circle cx="128" cy="102" r="3" fill="#C06040"/><circle cx="12" cy="148" r="3" fill="#C06080"/></g></g></svg>
<div class="t" style="left:1159.5px;top:901.0px;font-size:45.79px;color:#222B45;font-weight:700;letter-spacing:0.32px;transform:scaleX(1.0361);transform-origin:0 0;">Progress</div>
<div class="a" style="left:1399px;top:888px;width:153px;height:73px;background:#0029AA;border-radius:15px;"></div>
<svg class="a" style="left:1422px;top:909px;" width="36" height="36" viewBox="0 0 36 36"><path d="M18 3 V33 M3 18 H33" stroke="#fff" stroke-width="4" stroke-linecap="round"/></svg>
<div class="t" style="left:1468.4px;top:909.4px;font-size:30.52px;color:#FFFFFF;-webkit-text-stroke:0.3px #FFFFFF;letter-spacing:0.92px;transform:scaleX(1.1175);transform-origin:0 0;">Add</div>
<svg class="a" style="left:3126px;top:905px;" width="40" height="40" viewBox="0 0 40 40"><circle cx="16" cy="16" r="11.5" fill="none" stroke="#2A3347" stroke-width="3.4"/><path d="M25 25 L34 34" stroke="#2A3347" stroke-width="3.6" stroke-linecap="round"/></svg>
<div class="a" style="left:3215px;top:878.4px;width:266.5999999999999px;height:92.10000000000002px;box-sizing:border-box;border:2px solid #E4E7EC;border-radius:20px;background:#fff;"></div>
<div class="t" style="left:3244.9px;top:907.0px;font-size:34.88px;color:#2A3347;-webkit-text-stroke:0.3px #2A3347;letter-spacing:0.96px;transform:scaleX(1.1547);transform-origin:0 0;">Ongoing</div>
<svg class="a" style="left:3424px;top:910px;" width="34" height="28" viewBox="0 0 34 28"><path d="M5 7 L17 19 L29 7" fill="none" stroke="#2A3347" stroke-width="3.2" stroke-linecap="round" stroke-linejoin="round"/></svg>
<div class="a" style="left:1116px;top:1033px;width:2408px;height:1064px;box-sizing:border-box;background:#FFFFFF;border:1.5px solid #F3F3F8;border-radius:54px;box-shadow:0 1px 10px 1px rgba(60,60,150,0.05);"></div>
<div class="a" style="left:1680px;top:1076px;width:584px;height:122.70000000000005px;background:#F3F3F4;"></div>
<div class="t" style="left:1179.2px;top:1120.8px;font-size:36.34px;color:#4E596B;letter-spacing:1.13px;transform:scaleX(1.1243);transform-origin:0 0;">Name</div>
<div class="t" style="left:1699.4px;top:1120.8px;font-size:36.34px;color:#4E596B;letter-spacing:0.49px;transform:scaleX(1.0782);transform-origin:0 0;">Progress</div>
<svg class="a" style="left:1886px;top:1116px;" width="34" height="42" viewBox="0 0 34 42"><path d="M9.5 18 L18 9.5 L26.5 18 M9.5 27 L18 35.5 L26.5 27" fill="none" stroke="#4E596B" stroke-width="4.4" stroke-linecap="round" stroke-linejoin="round"/></svg>
<div class="t" style="left:2283.2px;top:1120.8px;font-size:36.34px;color:#4E596B;letter-spacing:0.79px;transform:scaleX(1.0947);transform-origin:0 0;">Qty</div>
<div class="t" style="left:2536.0px;top:1120.8px;font-size:36.34px;color:#4E596B;letter-spacing:0.50px;transform:scaleX(1.0924);transform-origin:0 0;">Total Qty</div>
<div class="t" style="left:2783.7px;top:1120.8px;font-size:36.34px;color:#4E596B;letter-spacing:0.63px;transform:scaleX(1.1127);transform-origin:0 0;">Start</div>
<div class="t" style="left:3136.2px;top:1120.8px;font-size:36.34px;color:#4E596B;letter-spacing:0.70px;transform:scaleX(1.0756);transform-origin:0 0;">End</div>
<div class="a" style="left:1159.6px;top:1197.7px;width:2312.4px;height:2.2000000000000455px;background:#EEEFF2;"></div>
<div class="a" style="left:1159.6px;top:1322.7px;width:2312.4px;height:2.2000000000000455px;background:#EEEFF2;"></div>
<div class="a" style="left:1159.6px;top:1448px;width:2312.4px;height:2.2000000000000455px;background:#EEEFF2;"></div>
<div class="a" style="left:1159.6px;top:1573.8px;width:2312.4px;height:2.2000000000000455px;background:#EEEFF2;"></div>
<div class="a" style="left:1159.6px;top:1698.7px;width:2312.4px;height:2.2000000000000455px;background:#EEEFF2;"></div>
<div class="a" style="left:1159.6px;top:1823.5px;width:2312.4px;height:2.2000000000000455px;background:#EEEFF2;"></div>
<div class="t" style="left:1181.8px;top:1243.7px;font-size:41.13px;color:#2A3347;letter-spacing:0.83px;transform:scaleX(1.1148);transform-origin:0 0;">Welding</div>
<div class="a" style="left:1722px;top:1258px;width:366.5px;height:10.599999999999909px;background:#F0F1F3;border-radius:6px;"></div>
<div class="a" style="left:1722px;top:1258px;width:86px;height:10.599999999999909px;background:#A667DA;border-radius:6px;"></div>
<div class="t" style="left:2130.9px;top:1243.7px;font-size:41.13px;color:#9AA1AD;letter-spacing:0.03px;transform:scaleX(1.0022);transform-origin:0 0;">20%</div>
<div class="t" style="left:2282.8px;top:1243.7px;font-size:41.13px;color:#2A3347;letter-spacing:0.94px;transform:scaleX(1.0723);transform-origin:0 0;">23</div>
<div class="t" style="left:2533.9px;top:1243.7px;font-size:41.13px;color:#2A3347;letter-spacing:-0.53px;transform:scaleX(0.9465);transform-origin:0 0;">100 %</div>
<div class="t" style="left:2782.1px;top:1243.7px;font-size:41.13px;color:#2A3347;letter-spacing:0.13px;transform:scaleX(1.0183);transform-origin:0 0;">Nov 13, 2024</div>
<div class="t" style="left:3136.0px;top:1243.7px;font-size:41.13px;color:#2A3347;letter-spacing:0.40px;transform:scaleX(1.0586);transform-origin:0 0;">Dec 25, 2024</div>
<div class="t" style="left:1178.3px;top:1369.5px;font-size:41.13px;color:#2A3347;letter-spacing:0.60px;transform:scaleX(1.1169);transform-origin:0 0;">Lighting Installation</div>
<div class="a" style="left:1722px;top:1383.8px;width:366.5px;height:10.599999999999909px;background:#F0F1F3;border-radius:6px;"></div>
<div class="a" style="left:1722px;top:1383.8px;width:234px;height:10.599999999999909px;background:#F6DC00;border-radius:6px;"></div>
<div class="t" style="left:2129.7px;top:1369.5px;font-size:41.13px;color:#9AA1AD;letter-spacing:0.18px;transform:scaleX(1.0136);transform-origin:0 0;">60%</div>
<div class="t" style="left:2281.9px;top:1369.5px;font-size:41.13px;color:#2A3347;letter-spacing:-0.06px;transform:scaleX(0.9931);transform-origin:0 0;">136.9</div>
<div class="t" style="left:2533.6px;top:1369.5px;font-size:41.13px;color:#2A3347;letter-spacing:0.22px;transform:scaleX(1.0324);transform-origin:0 0;">165 lb</div>
<div class="t" style="left:2783.6px;top:1369.5px;font-size:41.13px;color:#2A3347;letter-spacing:0.33px;transform:scaleX(1.0487);transform-origin:0 0;">Oct 27, 2024</div>
<div class="t" style="left:3138.8px;top:1369.5px;font-size:41.13px;color:#2A3347;letter-spacing:0.41px;transform:scaleX(1.0611);transform-origin:0 0;">Jan 8, 2025</div>
<div class="t" style="left:1180.0px;top:1494.3px;font-size:41.13px;color:#2A3347;letter-spacing:0.56px;transform:scaleX(1.0908);transform-origin:0 0;">Shaft Excavation</div>
<div class="a" style="left:1722px;top:1508.6px;width:366.5px;height:10.599999999999909px;background:#F0F1F3;border-radius:6px;"></div>
<div class="a" style="left:1722px;top:1508.6px;width:366.5px;height:10.599999999999909px;background:#4CC0A0;border-radius:6px;"></div>
<div class="t" style="left:2114.9px;top:1494.3px;font-size:41.13px;color:#9AA1AD;letter-spacing:-0.58px;transform:scaleX(0.9510);transform-origin:0 0;">100%</div>
<div class="t" style="left:2281.9px;top:1494.3px;font-size:41.13px;color:#2A3347;letter-spacing:-0.06px;transform:scaleX(0.9931);transform-origin:0 0;">136.9</div>
<div class="t" style="left:2533.6px;top:1494.3px;font-size:41.13px;color:#2A3347;letter-spacing:0.22px;transform:scaleX(1.0324);transform-origin:0 0;">165 lb</div>
<div class="t" style="left:2784.8px;top:1494.3px;font-size:41.13px;color:#2A3347;letter-spacing:0.41px;transform:scaleX(1.0618);transform-origin:0 0;">Jan 8, 2025</div>
<div class="t" style="left:3139.5px;top:1494.3px;font-size:41.13px;color:#2A3347;letter-spacing:0.12px;transform:scaleX(1.0165);transform-origin:0 0;">Apr 10, 2025</div>
<div class="t" style="left:1178.3px;top:1619.2px;font-size:41.13px;color:#2A3347;letter-spacing:0.87px;transform:scaleX(1.1291);transform-origin:0 0;">Landscaping</div>
<div class="a" style="left:1722px;top:1633.5px;width:366.5px;height:10.599999999999909px;background:#F0F1F3;border-radius:6px;"></div>
<div class="a" style="left:1722px;top:1633.5px;width:288.70000000000005px;height:10.599999999999909px;background:#B4F47C;border-radius:6px;"></div>
<div class="t" style="left:2129.9px;top:1619.2px;font-size:41.13px;color:#9AA1AD;letter-spacing:0.15px;transform:scaleX(1.0116);transform-origin:0 0;">80%</div>
<div class="t" style="left:2281.9px;top:1619.2px;font-size:41.13px;color:#2A3347;letter-spacing:-0.06px;transform:scaleX(0.9931);transform-origin:0 0;">136.9</div>
<div class="t" style="left:2533.6px;top:1619.2px;font-size:41.13px;color:#2A3347;letter-spacing:0.22px;transform:scaleX(1.0324);transform-origin:0 0;">165 lb</div>
<div class="t" style="left:2782.2px;top:1619.2px;font-size:41.13px;color:#2A3347;letter-spacing:0.10px;transform:scaleX(1.0134);transform-origin:0 0;">Feb 19, 2025</div>
<div class="t" style="left:3136.1px;top:1619.2px;font-size:41.13px;color:#2A3347;letter-spacing:0.21px;transform:scaleX(1.0302);transform-origin:0 0;">Mar 15, 2025</div>
<div class="t" style="left:1181.8px;top:1743.5px;font-size:41.13px;color:#2A3347;letter-spacing:0.58px;transform:scaleX(1.0874);transform-origin:0 0;">Water Features</div>
<div class="a" style="left:1722px;top:1757.8px;width:366.5px;height:10.599999999999909px;background:#F0F1F3;border-radius:6px;"></div>
<div class="a" style="left:1722px;top:1757.8px;width:174.5999999999999px;height:10.599999999999909px;background:#E99E17;border-radius:6px;"></div>
<div class="t" style="left:2131.0px;top:1743.5px;font-size:41.13px;color:#9AA1AD;letter-spacing:0.02px;">40%</div>
<div class="t" style="left:2281.9px;top:1743.5px;font-size:41.13px;color:#2A3347;letter-spacing:-0.06px;transform:scaleX(0.9931);transform-origin:0 0;">136.9</div>
<div class="t" style="left:2533.6px;top:1743.5px;font-size:41.13px;color:#2A3347;letter-spacing:0.22px;transform:scaleX(1.0324);transform-origin:0 0;">165 lb</div>
<div class="t" style="left:2784.9px;top:1743.5px;font-size:41.13px;color:#2A3347;letter-spacing:0.09px;transform:scaleX(1.0138);transform-origin:0 0;">Jul 14, 2025</div>
<div class="t" style="left:3139.5px;top:1743.5px;font-size:41.13px;color:#2A3347;letter-spacing:0.38px;transform:scaleX(1.0540);transform-origin:0 0;">Aug 28, 2025</div>
<svg class="a" style="left:2138px;top:1145px;" width="50" height="52" viewBox="0 0 50 52"><g transform="translate(2 1) scale(0.86) rotate(-8 25 26)"><path d="M14 4 C11 4 10 6 10 8 V28 L7 25 C5 23 2 23 1 25 C0 27 1 29 2 30 L14 44 C17 48 21 50 26 50 H32 C40 50 45 44 45 36 V24 C45 22 43 20 41 20 C39 20 37 22 37 24 V22 C37 20 35 18 33 18 C31 18 29 20 29 22 V20 C29 18 27 16 25 16 C23 16 21 18 21 20 V8 C21 6 20 4 17 4 Z" fill="#fff" stroke="#111" stroke-width="2.6" stroke-linejoin="round"/><path d="M25 32 V42 M31 32 V42 M37 32 V42" stroke="#111" stroke-width="2.2"/></g></svg>
<div class="a" style="left:3160.5px;top:0px;width:4.0px;height:240px;background:#17713A;"></div>
<div class="a" style="left:3148px;top:225px;width:28px;height:28px;background:#17713A;border-radius:50%;"></div>
</body></html>
